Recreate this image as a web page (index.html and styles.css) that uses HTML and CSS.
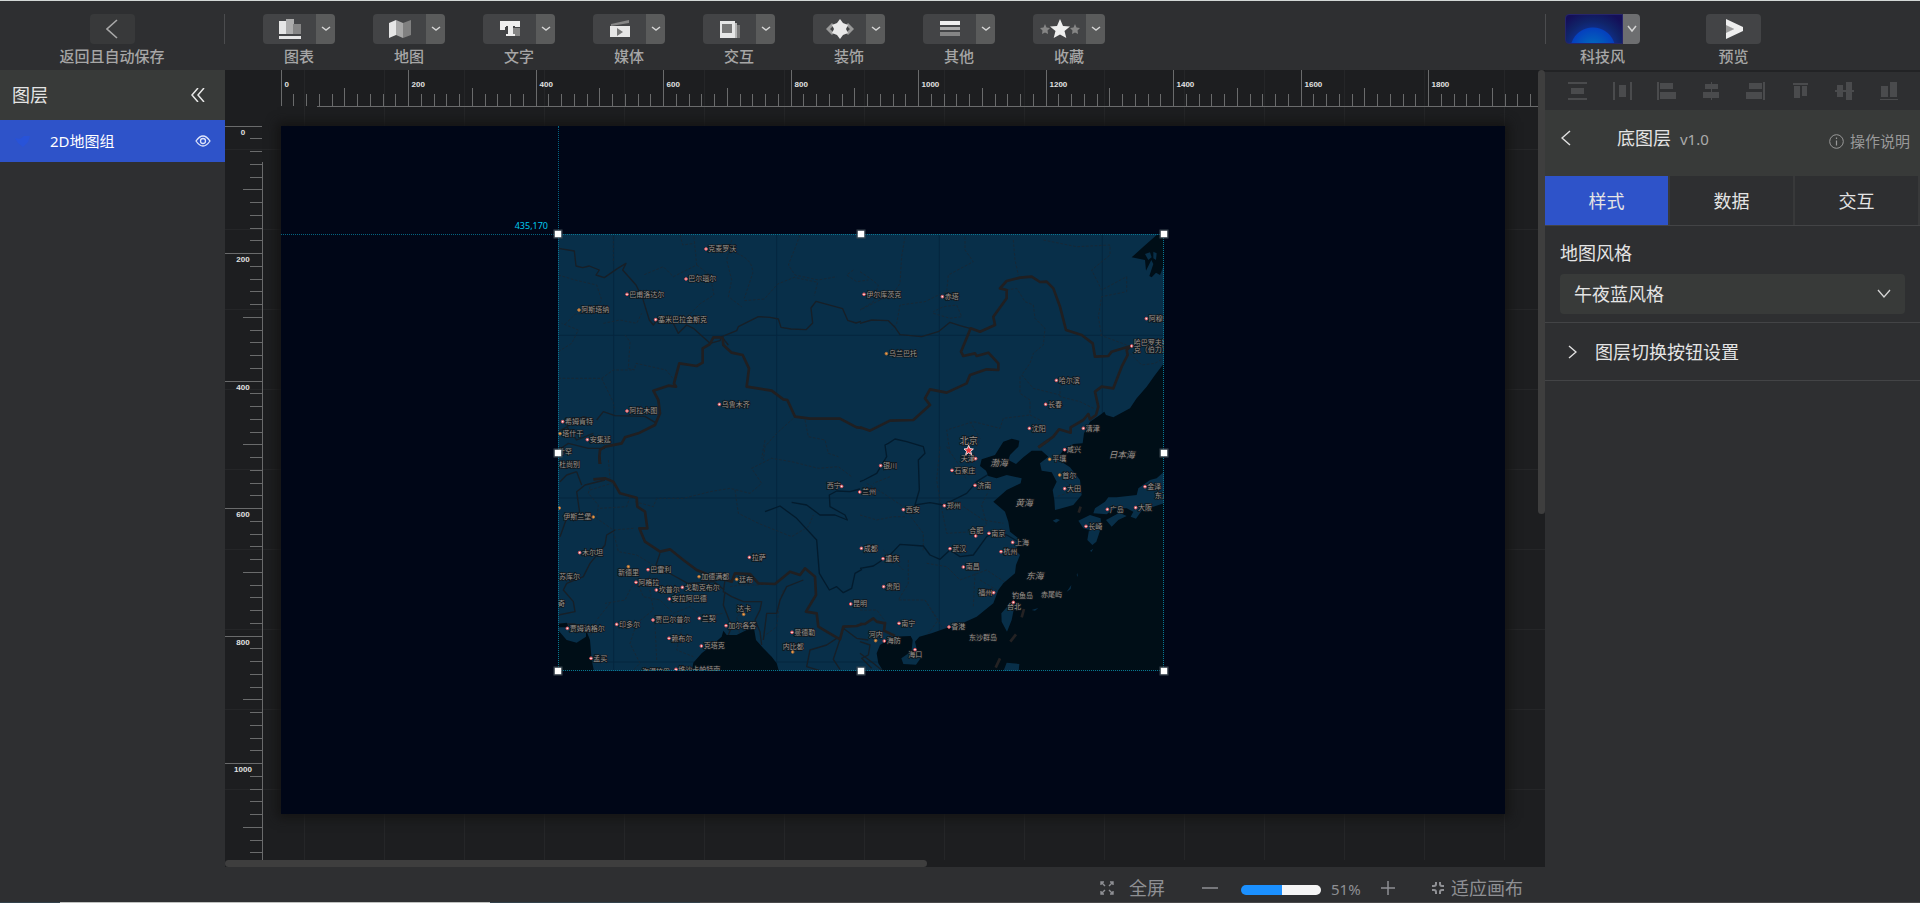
FILE: index.html
```html
<!DOCTYPE html>
<html lang="zh-CN">
<head>
<meta charset="utf-8">
<title>地图编辑器</title>
<link rel="stylesheet" href="styles.css">
</head>
<body>
<div class="app">
  <header class="topbar">
    <div class="topbar-back">
      <button class="tool-face back-face" id="back" aria-labelledby="back-label"><svg width="12" height="22" viewBox="0 0 12 22"><path d="M11 2L1 11l10 9" fill="none" stroke="#a8a8a8" stroke-width="1.6"/></svg></button>
      <label for="back" id="back-label" class="tool-label">返回且自动保存</label>
    </div>
    <nav class="tools">
      <div class="tool"><div class="split"><button class="tool-face" id="t1"><svg width="24" height="22" viewBox="0 0 24 22"><path fill="#e6e6e6" d="M1 3h8v13H1zM1 18h22v3H1z"/><path fill="#acacac" d="M8 1h8v15H8z"/><path fill="#858585" d="M15 6h8v10h-8z"/></svg></button><button class="tool-more" aria-label="更多图表"><svg width="10" height="6" viewBox="0 0 10 6"><path d="M1 1l4 3 4-3"/></svg></button></div><label class="tool-label" for="t1">图表</label></div>
      <div class="tool"><div class="split"><button class="tool-face" id="t2"><svg width="24" height="20" viewBox="0 0 24 20"><path fill="#e6e6e6" d="M1 4l7-3v15l-7 3z"/><path fill="#a8a8a8" d="M8 1l7 3v15l-7-3z"/><path fill="#808080" d="M15 4l8-3v15l-8 3z"/></svg></button><button class="tool-more" aria-label="更多地图"><svg width="10" height="6" viewBox="0 0 10 6"><path d="M1 1l4 3 4-3"/></svg></button></div><label class="tool-label" for="t2">地图</label></div>
      <div class="tool"><div class="split"><button class="tool-face" id="t3"><svg width="22" height="18" viewBox="0 0 22 18"><path fill="#858585" d="M12 8h9v8h-9z"/><path fill="#eee" d="M1 1h20v6h-5V6h-2v8h2v2H7v-2h2V6H7v1H6v3H1z"/></svg></button><button class="tool-more" aria-label="更多文字"><svg width="10" height="6" viewBox="0 0 10 6"><path d="M1 1l4 3 4-3"/></svg></button></div><label class="tool-label" for="t3">文字</label></div>
      <div class="tool"><div class="split"><button class="tool-face" id="t4"><svg width="22" height="20" viewBox="0 0 22 20"><path fill="#858585" d="M2 5l18-4v3L2 7z"/><path fill="#e6e6e6" d="M1 7h20v11H1z"/><path fill="#777" d="M8 9l6 4-6 4z"/></svg></button><button class="tool-more" aria-label="更多媒体"><svg width="10" height="6" viewBox="0 0 10 6"><path d="M1 1l4 3 4-3"/></svg></button></div><label class="tool-label" for="t4">媒体</label></div>
      <div class="tool"><div class="split"><button class="tool-face" id="t5"><svg width="22" height="20" viewBox="0 0 22 20"><path fill="#777" d="M9 6h12v13H9z"/><path fill="#b5b5b5" d="M7 4h11v15H7z"/><path fill="#e6e6e6" d="M1 2h15v17H1z"/><path fill="#777" d="M3 5h10v9H3z"/></svg></button><button class="tool-more" aria-label="更多交互"><svg width="10" height="6" viewBox="0 0 10 6"><path d="M1 1l4 3 4-3"/></svg></button></div><label class="tool-label" for="t5">交互</label></div>
      <div class="tool"><div class="split"><button class="tool-face" id="t6"><svg width="28" height="20" viewBox="0 0 28 20"><path fill="none" stroke="#999" stroke-width="3" d="M7 5l-5 5 5 5M21 5l5 5-5 5"/><path fill="#e8e8e8" d="M14 0l3 4 5 2-2 4 2 4-5 2-3 4-3-4-5-2 2-4-2-4 5-2z"/></svg></button><button class="tool-more" aria-label="更多装饰"><svg width="10" height="6" viewBox="0 0 10 6"><path d="M1 1l4 3 4-3"/></svg></button></div><label class="tool-label" for="t6">装饰</label></div>
      <div class="tool"><div class="split"><button class="tool-face" id="t7"><svg width="22" height="18" viewBox="0 0 22 18"><path fill="#eee" d="M1 1h20v4H1z"/><path fill="#aaa" d="M1 7h20v3H1z"/><path fill="#858585" d="M1 12h20v4H1z"/></svg></button><button class="tool-more" aria-label="更多其他"><svg width="10" height="6" viewBox="0 0 10 6"><path d="M1 1l4 3 4-3"/></svg></button></div><label class="tool-label" for="t7">其他</label></div>
      <div class="tool"><div class="split"><button class="tool-face" id="t8"><svg width="40" height="20" viewBox="0 0 40 20"><path fill="#858585" d="M5 5l1.500 3.500 3.500.5-2.500 2.500.6 3.500L5 13.500 2 15l.5-3.500L0 9l3.500-.5zM35 5l1.500 3.500 3.500.5-2.500 2.500.6 3.500-3.100-1.500-3 1.500.5-3.500L30 9l3.500-.5z"/><path fill="#eee" d="M20 0l3 7 7 .5-5.500 4.500 1.800 7L20 15.500 13.700 19l1.800-7L10 7.500 17 7z"/></svg></button><button class="tool-more" aria-label="更多收藏"><svg width="10" height="6" viewBox="0 0 10 6"><path d="M1 1l4 3 4-3"/></svg></button></div><label class="tool-label" for="t8">收藏</label></div>
    </nav>
    <div class="topbar-right">
      <div class="tool theme"><div class="split"><button class="theme-face" id="theme" aria-label="科技风"></button><button class="tool-more theme-more" aria-label="切换主题"><svg width="10" height="8" viewBox="0 0 10 8"><path d="M1 1l4 5 4-5"/></svg></button></div><label class="tool-label" for="theme">科技风</label></div>
      <div class="tool preview"><button class="tool-face preview-face" id="preview"><svg width="20" height="20" viewBox="0 0 20 20"><path fill="#999" d="M2 5l8 5-8 5z"/><path fill="#eee" d="M2 0l17 8v4L2 20v-6l8-4-8-4z"/></svg></button><label class="tool-label" for="preview">预览</label></div>
    </div>
  </header>

  <div class="main">
    <aside class="layers">
      <div class="layers-head"><h2 class="panel-title">图层</h2><button class="plain" aria-label="收起"><svg width="14" height="14" viewBox="0 0 14 14"><path d="M7 0L1 7l6 7M13 0L7 7l6 7" fill="none" stroke="#e8e8e8" stroke-width="1.500"/></svg></button></div>
      <div class="layer-item">
        <svg width="18" height="14" viewBox="0 0 18 14"><path fill="#2853d8" d="M1 4l5 1 4-3 6 0-2 6-5 5-5-4z"/></svg>
        <span class="layer-name">2D地图组</span>
        <button class="plain" aria-label="显示或隐藏"><svg width="16" height="12" viewBox="0 0 16 12"><path d="M1 6q7-10 14 0q-7 10-14 0z" fill="none" stroke="#dfe5fa" stroke-width="1.300"/><circle cx="8" cy="6" r="2.500" fill="none" stroke="#dfe5fa" stroke-width="1.300"/></svg></button>
      </div>
    </aside>

    <section class="center">
      <div class="workspace">
        <svg class="ruler ruler-x" id="rulerX"></svg>
        <svg class="ruler ruler-y" id="rulerY"></svg>
        <div class="artboard">
          <div class="guide guide-v"></div>
          <div class="guide guide-h"></div>
          <span class="coord">435,170</span>
          <div class="widget">
            <svg class="map" viewBox="0 0 1818 1311" preserveAspectRatio="none">
              <rect class="land" width="1818" height="1311"/>
              <path class="meridian" d="M167 0V1311M656 0V1311M1144 0V1311M1633 0V1311M0 304H1818M0 792H1818M0 1284H1818"/>
              <g transform="translate(-24 -42)">
                <path class="province" d="M190 50V130M390 45l8 30 36 -5M432 50l8 85-70 35-30-30-60 25M440 135l40 30 12 60-40 25-35 35-80 20M545 60l-15 60 15 60-10 50 40 30M560 100q50 20 48 60l-25 75M583 242l60-5 40-45 50-20 70 15-10 40M750 45l-15 40-20 50 20 30 70 15 55-10M910 150l-20 15 30 20 35-5M25 165l50 15 65 15 15 45-25 35-55 8-30 30M160 310l50-10 50 10 15-30M225 345l15 20-5 80 18 5 5-20 90 20 25 30M25 475h130l35 72 5 30M155 475l35-25 55 0M730 595l-50 45-35 40-5 40M765 600l10 50 50 10 10 40 30 10M25 395l40-25 20-40-50-20"/>
                <path class="thin" d="M25 85l48 8 5 45 20 5 20-5 30 12-10 15 25 8 40-28 25-15-10 20 40 45 20 40 20 65 12 15 15-20 20 15 25 0 15 30 25-25 20 10 50 45 30-8 5-12 20 25M510 352l50-20 5-12 60-30 35 2 25 5 8 25 30 5 45 2 20-20-5-45 15-20 80 22 15 35 25 8 15-5M140 600l20-25 35 12 90 2 30 18M25 635l35-20 40-25 30 8M50 620l30 40 50-20M25 690l30-20 60 15 50 0"/>
                <path class="thick" d="M510 352L490 352 480 372 458 385 458 428 440 438 388 430 372 490 378 500 355 497 310 512 325 540 330 580 315 615 265 640 225 652 215 670 165 680 150 690 148 710 150 732M510 352L518 354 520 375 545 398 578 405 597 445 590 500 665 512 700 538 712 540 735 590 780 596 870 596 920 622 936 624"/>
              </g>
              <g transform="translate(906 -42)">
                <path class="province" d="M135 50l-10 60-5 80-20 30-100 50M315 50l0 40 25 35-75 40-5 50-35 15-30 15-75 10-10 55-15 20M460 60l5 60 10 45M440 210l30-5 25 40 25 10 5 40 30 30-5 50-30 25-10 30-25 35 35 40 80 20M480 470v50l30 20 0 45 40 20M550 60l100 20 100-5 0 30-55 45 30 60 75-40 0 45-75 15-10 60 10 60M720 345l80 30M0 155l30 20 25 20-15 50-40 25M220 280l50 15 35-5-15-35-40 5-30 15M810 400l35 35 40-5 25-15M270 700l-10-70 80-25 80 20 10-30 80-10M600 500l0 30 60 15 40 20M330 605l30 50-20 50"/>
                <path class="thin" d="M0 310l35-10 50 2 20 20 15 22 65 6 50-15 35-28 30 10 30 8"/>
                <path class="thick" d="M0 622L30 632 90 602 160 600 210 555 195 535 210 508 260 518 320 490 330 465 380 448 415 450 415 430 385 398 350 408 345 400 310 408 303 395 332 325 360 335 405 315 400 290 440 235 440 210 420 205 440 183 480 173 515 170 540 186 560 185 580 205 600 260 618 330 665 345 698 370 705 410 745 408 755 395 812 378 800 390 803 405 785 440 760 505 725 500 705 515 715 560 708 585 690 598 685 582 670 600 632 622 632 638 597 628 580 650 535 682"/>
                <path class="sea" d="M890 45L912 42 912 135 900 165 888 158 875 172 868 168 880 132 874 120 858 152 855 120 815 112 850 80z"/>
                <path class="lake-land" d="M855 102l15-5 5 15-10 8zM880 95l10 5-2 20-8-5z"/>
              </g>
              <g transform="translate(-24 618)">
                <path class="province" d="M175 60l5 55M120 140l-5 20 30 35-5 40 50 35 60-5M120 150l65-20 25 25M240 170l-10 30-80 5M255 185l55 15 10-25 80 0 80-20 60-10 60 15 35-30-30-45 60-30 60 10 80 20 60-5 40 30M645 0l-10 55M555 150l10 70 60 30 100 40 50-30 15-35M190 275l15 60 55 10 50 30-15 45-50 20-20 40-60 10M250 400l30 70 50 10 40 40 50-20 40 30 60-10M180 490l-40 50-20 50M300 450l10 60-50 40-20 60 30 60-20 20M320 660l-5-110M400 550l-20 80 50 20M540 440l30-5 60 0M600 500l-40 30 10 60M700 450l-10 30-10 80-40 30"/>
                <path class="thin" d="M165 120l-60 15-25 20 10 70-40 10-20 55M80 95l-30 10-20 20M95 135l-15-40M195 270l-25 15-5 30-45 55-20 40-50 20-10 20 30 35 5 30-50 10M330 340l-12 35 50 30 45 25 80-5 30 25M525 420l-5 35 25 15 35 15 55 0-5 25-15 30 15 35 5 40M525 455l-5 40 25 65-10 25M640 600l10-80 30 0 10-40 20-40 50-20M860 595l-30 20-50 15-10 50 40 12M870 598l-20 60 20 30M880 565l40 30 35 5M25 552l50 0 10 15 35-5"/>
                <path class="river" d="M645 215L690 198 740 235 800 300 808 400 838 450 860 440 880 458 905 445 915 400 936 388M725 187l45 8 40 30 45 0 37 15-7-15-45-25-2-35 22-12 40 2 30-8"/>
                <path class="thick" d="M148 50L150 72M130 118L165 115 190 125 210 160 260 173 262 200 285 215 292 265 268 265 285 305 330 335 360 328 400 360 440 390 470 402 545 425 555 400 600 402 625 430 675 432 720 395 750 405 765 385 795 410 798 465 768 515 800 520 805 560 830 575 870 598 880 560 920 558 936 552"/>
                <path class="sea" d="M425 694L430 668 455 640 490 612 515 590 520 572 530 585 560 585 590 570 612 565 618 600 640 625 665 650 680 670 687 694zM24 570L50 600 80 608 108 590 108 570 120 600 125 660 132 694 24 694zM24 552L50 548 56 562 24 562z"/>
              </g>
              <g transform="translate(906 618)">
                <path class="province" d="M20 130l50 30 60 40 60 80 0 55M0 225l50 15 50-10 40 0M240 20l-10 100 10 60 20 100 80-5 40-20-15-60 20-40M260 20l40 60 20 40M200 370l60 10 40 40 80-30 60 40M145 360l0 70-30 50 80 0 50 80M70 330l60 60M310 200l60 40 60 10M345 400l-5 100M360 420l50 30M0 510l50 0 30 40M90 110l-50 20M195 480l40 60-30 40M590 100l60 50-60 20"/>
                <path class="river" d="M0 125L12 120 50 100 80 50 75 15 85 10 105 -3 140 5 190 20 195 40 175 60 178 150 165 195 210 188 250 195 320 160 350 125 390 100M0 385L40 378 90 345 120 313 190 318 210 345 240 358 270 330 300 350 340 345 380 290 400 280 440 285 475 305"/>
                <path class="thin" d="M0 605l30 10-5 30-20 10 30 30M0 640l40 30 25 20"/>
                <path class="thick" d="M0 552L15 552 40 535 50 545 75 550 72 572 105 588"/>
                <path class="sea" d="M912 -230L885 -195 860 -160 830 -125 810 -95 760 -68 738 -75 733 -85 720 -75 690 -55 672 -20 668 10 640 12 610 30 600 45 600 62 630 82 660 120 665 165 640 195 600 206 585 210 583 180 578 150 590 125 575 97 545 92 540 70 565 50 545 32 515 32 490 52 468 72 445 60 450 45 475 20 478 2 455 -4 430 5 405 45 365 58 360 78 378 92 385 108 410 115 440 105 485 115 482 130 440 150 400 185 435 215 445 245 450 275 475 295 480 310 465 330 480 345 468 375 465 400 430 430 415 450 400 490 350 530 310 548 270 560 215 580 178 590 165 605 172 635 155 630 158 600 152 588 100 590 60 615 50 640 55 670 70 694 912 694z"/>
                <path class="island" d="M912 95L890 115 870 120 835 145 830 165 770 172 745 172 735 185 705 205 700 220 740 223 765 205 800 205 820 215 812 230 828 236 850 205 880 200 912 190zM738 240l40-22 22 10-25 12-20 20zM655 242l35-17 32 10 2 25-15 45-12 10-15-15 5-30-17-5zM424 520L455 485 464 495 455 540 441 575 425 545zM124 655L150 637 185 650 168 674 130 672zM430 694l10-26 38 4-2 22zM578 242l12-6 10 4-12 8zM620 455l14-20-2 12zM690 332l10-6-6 10zM515 510l20-6-10 8zM650 405l2-6 2 12z"/>
                <path class="sea-border" d="M535 22l32-22M492 507l-7 25M468 583l-17 22M420 655l-13 28M662 200l-6 18"/>
              </g>
              <g id="cities"></g>
            </svg>
            <i class="handle h-nw"></i><i class="handle h-n"></i><i class="handle h-ne"></i>
            <i class="handle h-w"></i><i class="handle h-e"></i>
            <i class="handle h-sw"></i><i class="handle h-s"></i><i class="handle h-se"></i>
          </div>
        </div>
        <div class="vscroll"></div>
        <div class="hscroll"></div>
      </div>
      <footer class="zoombar">
        <button class="plain zb-full"><svg width="14" height="14" viewBox="0 0 14 14" fill="none" stroke="#8f9094" stroke-width="1.400"><path d="M1 4V1h3M10 1h3v3M13 10v3h-3M4 13H1v-3M1 1l4 4M13 1L9 5M13 13L9 9M1 13l4-4"/></svg>全屏</button>
        <button class="plain zb-minus" aria-label="缩小"><svg width="16" height="16" viewBox="0 0 16 16"><path d="M0 8h16" stroke="#8f9094" stroke-width="1.500"/></svg></button>
        <input class="zoom-range" id="zoom" type="range" min="0" max="100" value="51">
        <label class="zoom-value" for="zoom">51%</label>
        <button class="plain zb-plus" aria-label="放大"><svg width="14" height="14" viewBox="0 0 14 14"><path d="M0 7h14M7 0v14" stroke="#8f9094" stroke-width="1.500"/></svg></button>
        <button class="plain zb-fit"><svg width="12" height="12" viewBox="0 0 12 12" fill="none" stroke="#8f9094" stroke-width="2"><path d="M4 0v2q0 2-2 2H0M8 0v2q0 2 2 2h2M8 12v-2q0-2 2-2h2M4 12v-2q0-2-2-2H0"/></svg>适应画布</button>
      </footer>
    </section>

    <aside class="props">
      <div class="align-bar">
        <button class="plain" aria-label="垂直分布"><svg width="19" height="18" viewBox="0 0 19 18"><path d="M0 0h19v2H0zM3 6h13v6H3zM0 16h19v2H0z"/></svg></button>
        <button class="plain" aria-label="水平分布"><svg width="19" height="18" viewBox="0 0 19 18"><path d="M0 0h2v18H0zM6 3h7v12H6zM17 0h2v18h-2z"/></svg></button>
        <button class="plain" aria-label="左对齐"><svg width="19" height="18" viewBox="0 0 19 18"><path d="M0 0h2v18H0zM3 1h13v6H3zM3 10h16v7H3z"/></svg></button>
        <button class="plain" aria-label="水平居中"><svg width="19" height="18" viewBox="0 0 19 18"><path d="M9 0h1v18H9zM3 2h13v5H3zM1 10h16v6H1z"/></svg></button>
        <button class="plain" aria-label="右对齐"><svg width="19" height="18" viewBox="0 0 19 18"><path d="M17 0h2v18h-2zM3 1h13v6H3zM0 10h16v7H0z"/></svg></button>
        <button class="plain" aria-label="顶对齐"><svg width="19" height="18" viewBox="0 0 19 18"><path d="M2 1h15v2H2zM3 4h6v12H3zM11 4h5v10h-5z"/></svg></button>
        <button class="plain" aria-label="垂直居中"><svg width="19" height="18" viewBox="0 0 19 18"><path d="M0 8h19v2H0zM2 3h6v12H2zM11 0h6v18h-6z"/></svg></button>
        <button class="plain" aria-label="底对齐"><svg width="19" height="18" viewBox="0 0 19 18"><path d="M0 17h18v1H0zM1 4h7v11H1zM10 0h7v15h-7z"/></svg></button>
      </div>
      <div class="props-head">
        <button class="plain" aria-label="返回"><svg width="10" height="16" viewBox="0 0 10 16"><path d="M9 1L1 8l8 7" fill="none" stroke="#e0e0e0" stroke-width="1.500"/></svg></button>
        <h2 class="props-title">底图层</h2><span class="version">v1.0</span>
        <a class="help" href="#help"><svg width="15" height="15" viewBox="0 0 15 15"><circle cx="7.500" cy="7.500" r="6.800" fill="none" stroke="#999"/><path d="M7.500 6.500v5M7.500 3.500v1.500" stroke="#999" stroke-width="1.200"/></svg>操作说明</a>
      </div>
      <div class="tabs"><button class="tab active">样式</button><button class="tab">数据</button><button class="tab">交互</button></div>
      <div class="field">
        <label for="style">地图风格</label>
        <div class="select-wrap"><select id="style"><option>午夜蓝风格</option></select><svg width="14" height="10" viewBox="0 0 14 10"><path d="M1 1l6 7 6-7" fill="none" stroke="#d5d5d5" stroke-width="1.300"/></svg></div>
      </div>
      <button class="fold"><svg width="9" height="14" viewBox="0 0 9 14"><path d="M1 1l7 6-7 6" fill="none" stroke="#e0e0e0" stroke-width="1.400"/></svg>图层切换按钮设置</button>
    </aside>
  </div>
</div>
<script src="script.js"></script>
</body>
</html>
```
FILE: styles.css
```css
* { box-sizing: border-box; }
body { margin: 0; background: #2e2f31; color: #e4e4e4; font: 15px/20px "Noto Sans", "Noto Sans CJK SC", sans-serif; }
button, select { font: inherit; color: inherit; border: 0; padding: 0; }
h2 { margin: 0; font-weight: 400; }
.plain { background: none; display: inline-flex; align-items: center; }
.app { height: 100vh; display: flex; flex-direction: column; border-top: 1px solid #d3d8d6; overflow: hidden; position: relative; }
.app::after { content: ""; position: absolute; left: 0; right: 0; bottom: 0; height: 1px; background: linear-gradient(90deg, #33414b 60px, #bfc1bf 60px 490px, #33414b 490px 700px, #48494b 700px); }

/* top bar */
.topbar { height: 69px; flex: none; display: flex; padding-top: 13px; }
.topbar-back { width: 225px; display: flex; flex-direction: column; align-items: center; position: relative; border-right: 1px solid #4b4c4e; height: 30px; }
.tool-face { width: 53px; height: 30px; flex: none; border-radius: 4px 0 0 4px; background: #434446; display: flex; align-items: center; justify-content: center; }
.back-face { width: 45px; border-radius: 4px; background: #38393a; }
.tool-label { color: #a6a6a6; font-weight: 500; white-space: nowrap; margin-top: 2px; line-height: 20px; }
.tools { display: flex; gap: 38px; margin-left: 38px; }
.tool { display: flex; flex-direction: column; align-items: center; }
.split { display: flex; }
.tool-more { width: 19px; height: 30px; border-radius: 0 4px 4px 0; background: #5a5b5b; display: flex; align-items: center; justify-content: center; }
.tool-more path { fill: none; stroke: #d4d4d4; stroke-width: 1.5; }
.topbar-right { margin-left: auto; width: 375px; height: 30px; display: flex; gap: 66px; padding-left: 19px; border-left: 1px solid #4b4c4e; }
.theme-face { width: 58px; height: 30px; border: 1px solid #26256b; border-radius: 4px 0 0 4px; background: radial-gradient(circle at 48% 125%, #0074bd 0, #0540bd 22px, #102b80 23px, #102469 29px, #140f58 40px); }
.theme-more { width: 17px; background: #6d6e70; }
.preview-face { width: 55px; border-radius: 4px; }

.main { flex: 1; min-height: 0; display: flex; }

/* layers */
.layers { width: 225px; flex: none; }
.layers-head { height: 50px; background: #383a39; display: flex; align-items: center; justify-content: space-between; padding: 0 20px 0 12px; }
.panel-title { font-size: 18px; line-height: 24px; }
.layer-item { height: 42px; background: #2e53c9; display: flex; align-items: center; padding: 0 14px; color: #fff; }
.layer-name { margin-left: 18px; flex: 1; }

/* workspace */
.center { flex: 1; min-width: 0; display: flex; flex-direction: column; }
.workspace { flex: 1; min-height: 0; position: relative; overflow: hidden; padding: 56px 0 0 56px;
  background: repeating-linear-gradient(90deg, transparent 0 79px, #252628 79px 80px), repeating-linear-gradient(transparent 0 79px, #252628 79px 80px), #1d1e20; }
.ruler { position: absolute; left: 0; top: 0; pointer-events: none; }
.ruler-x { width: calc(100% - 7px); height: 40px; }
.ruler-y { width: 40px; height: calc(100% - 7px); }
.ruler line { stroke: #6a6b6c; stroke-width: 1; shape-rendering: crispEdges; }
.ruler text { font: bold 8px "Liberation Sans", sans-serif; fill: #e2e2e2; }
.artboard { width: 1224px; height: 688px; background: #000617; position: relative; box-shadow: 0 0 10px 4px #141414; }
.guide { position: absolute; opacity: .8; }
.guide-v { left: 277px; top: 0; height: 108px; border-left: 1px dotted #067b9a; }
.guide-h { left: 0; top: 108px; width: 277px; border-top: 1px dotted #067b9a; }
.coord { position: absolute; right: 957px; top: 93px; font-size: 9px; line-height: 14px; color: #00c8f0; }
.widget { position: absolute; left: 277px; top: 108px; width: 606px; height: 437px; outline: 1px dotted #087592; outline-offset: -1px; }
.map { display: block; width: 100%; height: 100%; }
.handle { position: absolute; width: 7px; height: 7px; background: #fff; outline: 1px solid #3a4650; transform: translate(-50%, -50%); }
.h-nw, .h-n, .h-ne { top: 0; } .h-w, .h-e { top: 50%; } .h-sw, .h-s, .h-se { top: 100%; }
.h-nw, .h-w, .h-sw { left: 0; } .h-n, .h-s { left: 50%; } .h-ne, .h-e, .h-se { left: 100%; }
.vscroll { position: absolute; right: 0; top: 0; width: 7px; height: 444px; border-radius: 4px; background: #3e3e3e; }
.workspace::before { content: ""; position: absolute; left: 0; right: 7px; bottom: 0; height: 7px; background: #1d1e20; }
.hscroll { position: absolute; left: 0; bottom: 0; width: 702px; height: 7px; border-radius: 4px; background: #3e3e3e; }

/* map */
.land, .island, .lake-land { fill: #082f49; }
.sea { fill: #000e17; }
.meridian { fill: none; stroke: #05263f; stroke-width: 3; }
.province { fill: none; stroke: #172836; stroke-width: 3; stroke-dasharray: 8 5; }
.thin { fill: none; stroke: #171f27; stroke-width: 4; stroke-linejoin: round; }
.thick { fill: none; stroke: #201f21; stroke-width: 8; stroke-linejoin: round; }
.river { fill: none; stroke: #031b2d; stroke-width: 4; stroke-linejoin: round; }
.sea-border { fill: none; stroke: #242223; stroke-width: 8; }
.city { font: 21px "Noto Sans CJK SC", sans-serif; fill: #9a948d; stroke: #10171d; stroke-width: 5; paint-order: stroke; dominant-baseline: central; }
.city.big { font-size: 27px; }
.city.water { font-size: 26px; font-style: italic; }
.dot { fill: #f7e9e9; stroke: #dc4a52; stroke-width: 3; }
.dot.cap { fill: #f0a64a; stroke: #a2683b; }
.star { fill: #e8343c; stroke: #f4dede; stroke-width: 3; }

/* zoom bar */
.zoombar { height: 36px; flex: none; display: flex; align-items: center; justify-content: flex-end; padding: 5px 22px 0 0; color: #8f9094; }
.zb-full, .zb-fit { font-size: 18px; line-height: 24px; }
.zb-full { gap: 15px; }
.zb-minus { margin-left: 37px; }
.zoom-range { appearance: none; width: 80px; height: 10px; margin: 4px 10px 0 23px; border-radius: 5px; overflow: hidden; background: linear-gradient(90deg, #1b90ff 51%, #f5f5f5 51%); }
.zoom-range::-webkit-slider-thumb { appearance: none; width: 10px; height: 10px; opacity: 0; }
.zoom-value { width: 30px; margin-top: 2px; }
.zb-plus { margin-left: 20px; }
.zb-fit { margin-left: 37px; gap: 7px; }

/* properties */
.props { width: 375px; flex: none; border-top: 2px solid #222325; }
.align-bar { height: 38px; display: flex; align-items: center; justify-content: space-between; padding: 0 21px 0 23px; }
.align-bar path { fill: #4a4b4d; }
.props-head { height: 66px; background: #383a39; display: flex; align-items: center; padding: 0 10px 10px 16px; }
.props-title { margin-left: 46px; font-size: 18px; line-height: 24px; }
.version { margin-left: 9px; padding-top: 2px; color: #ababab; }
.help { margin-left: auto; display: flex; align-items: center; gap: 6px; color: #999; text-decoration: none; padding-top: 6px; }
.tabs { display: flex; gap: 2px; padding-right: 2px; background: #38393a; border-bottom: 1px solid #434446; }
.tab { flex: 1; height: 49px; font-size: 18px; background: #2e2f31; }
.tab.active { background: #2e53c9; }
.field { padding: 15px 15px 8px; height: 97px; border-bottom: 1px solid #434446; font-size: 18px; line-height: 24px; display: flex; flex-direction: column; justify-content: space-between; }
.select-wrap { position: relative; height: 40px; }
.select-wrap select { appearance: none; display: block; width: 100%; height: 40px; border-radius: 4px; background: #383a39; padding: 0 14px; }
.select-wrap svg { position: absolute; right: 14px; top: 15px; pointer-events: none; }
.fold { display: flex; align-items: center; gap: 18px; width: 100%; height: 58px; padding-left: 23px; background: none; border-bottom: 1px solid #434446; font-size: 18px; line-height: 24px; }
```
FILE: script.js
```js
const NS = "http://www.w3.org/2000/svg";
function add(parent, tag, attrs, text) {
  const el = document.createElementNS(NS, tag);
  for (const k in attrs) el.setAttribute(k, attrs[k]);
  if (text) el.textContent = text;
  parent.appendChild(el);
}

// Rulers: one tick for every 20 units
const STEP = 12.75, ORIGIN = 56;
const rx = document.getElementById("rulerX"), ry = document.getElementById("rulerY");
for (let i = 0; i < 99; i++) {
  const p = Math.floor(ORIGIN + i * STEP) + 0.5;
  const start = i % 10 === 0 ? 0 : i % 5 === 0 ? 18 : 24;
  add(rx, "line", { x1: p, x2: p, y1: start, y2: 36 });
  if (i < 58) add(ry, "line", { y1: p, y2: p, x1: i % 10 === 0 ? 0 : i % 5 === 0 ? 18 : 25, x2: 37 });
  if (i % 10 === 0) {
    add(rx, "text", { x: p + 3, y: 17 }, String(i * 20));
    if (i < 58) add(ry, "text", { x: 18, y: p + 8, "text-anchor": "middle" }, String(i * 20));
  }
}
add(rx, "line", { x1: 92, x2: 4000, y1: 36.5, y2: 36.5 });
add(ry, "line", { y1: 92, y2: 4000, x1: 37.5, x2: 37.5 });

// Cities: [dot x, dot y, name, text x, text y, kind] in tile units, with tile offsets
const tiles = [
  [-24, -42, [
    [468,87,"克麦罗沃"],[408,177,"巴尔瑙尔"],[231,223,"巴甫洛达尔"],[87,270,"阿斯塔纳",94,268,"cap"],
    [317,299,"塞米巴拉金斯克"],[508,553,"乌鲁木齐"],[231,573,"阿拉木图"],[38,605,"希姆肯特"],
    [30,641,"塔什干",37,639,"cap"],[112,659,"安集延"],[0,0,"什罕",24,694,"none"]]],
  [906, -42, [
    [12,223,"伊尔库茨克"],[247,230,"赤塔"],[859,296,"阿穆尔"],[79,401,"乌兰巴托",87,399,"cap"],
    [815,378,"哈巴罗夫斯",821,366],[0,0,"克（伯力）",821,387,"none"],[589,481,"哈尔滨"],[557,553,"长春"],[508,625,"沈阳"],
    [670,625,"清津"],[614,689,"咸兴"],[0,0,"北京",299,662,"none big"],[0,0,"日本海",746,701,"none water"]]],
  [-24, 618, [
    [0,0,"杜尚别",27,73,"none"],[875,139,"西宁",830,136],[929,156,"兰州"],[28,204,"",0,0,"cap"],
    [130,231,"伊斯兰堡",40,228,"cap"],[89,338,"木尔坦"],[598,352,"拉萨"],[235,380,"新德里",204,396,"cap"],
    [294,389,"巴雷利"],[0,0,"苏库尔",27,408,"none"],[447,410,"加德满都",454,408,"cap"],[560,418,"廷布",567,416,"cap"],
    [258,427,"阿格拉"],[319,450,"坎普尔"],[397,442,"戈勒克布尔"],[358,477,"安拉阿巴德"],[902,492,"昆明"],
    [581,523,"达卡",561,504,"cap"],[0,0,"奇",24,488,"none"],[200,553,"印多尔"],[309,540,"贾巴尔普尔"],[448,535,"兰契"],
    [528,557,"加尔各答"],[52,565,"贾姆讷格尔"],[726,577,"曼德勒"],[357,595,"赖布尔"],[454,618,"克塔克"],
    [728,636,"内比都",698,618,"cap"],[123,655,"孟买"],[378,688,"维沙卡帕特南"],[0,0,"海得拉巴",276,694,"none"]]],
  [906, 618, [
    [347,56,"天津",302,55],[0,0,"渤海",391,65,"none water"],[569,58,"平壤",577,55,"cap"],[62,77,"银川"],
    [276,91,"石家庄"],[599,105,"首尔",607,104,"cap"],[345,136,"济南"],[614,146,"大田"],[855,140,"金泽"],[0,0,"东京",884,164,"none"],
    [0,0,"黄海",466,187,"none water"],[130,209,"西安"],[253,197,"郑州"],[742,208,"广岛"],[827,203,"大阪"],
    [678,259,"长崎"],[347,288,"合肥",328,270],[387,280,"南京"],[458,307,"上海"],[4,325,"成都"],[270,326,"武汉"],
    [423,335,"杭州"],[69,356,"重庆"],[310,381,"南昌"],[0,0,"东海",498,405,"none water"],[71,440,"贵阳"],
    [401,458,"福州",355,456],[0,0,"钓鱼岛",456,465,"none"],[0,0,"赤尾屿",543,462,"none"],[460,487,"台北",441,499],
    [117,550,"南宁"],[267,561,"香港"],[0,0,"东沙群岛",327,590,"none"],[47,602,"河内",26,583,"cap"],[73,603,"海防"],
    [165,629,"海口",145,642]]]
];
const cities = document.getElementById("cities");
for (const [dx, dy, list] of tiles) {
  for (const [x, y, name, tx = x + 7, ty = y - 2, kind = ""] of list) {
    if (name) add(cities, "text", { x: tx + dx, y: ty + dy, class: "city " + kind }, name);
    if (!kind.includes("none")) add(cities, "circle", { cx: x + dx, cy: y + dy, r: 4, class: "dot " + kind });
  }
}
add(cities, "path", { class: "star", d: "M1232 634l4 10 10 1-8 7 3 10-9-6-9 6 3-10-8-7 10-1z" });
```
